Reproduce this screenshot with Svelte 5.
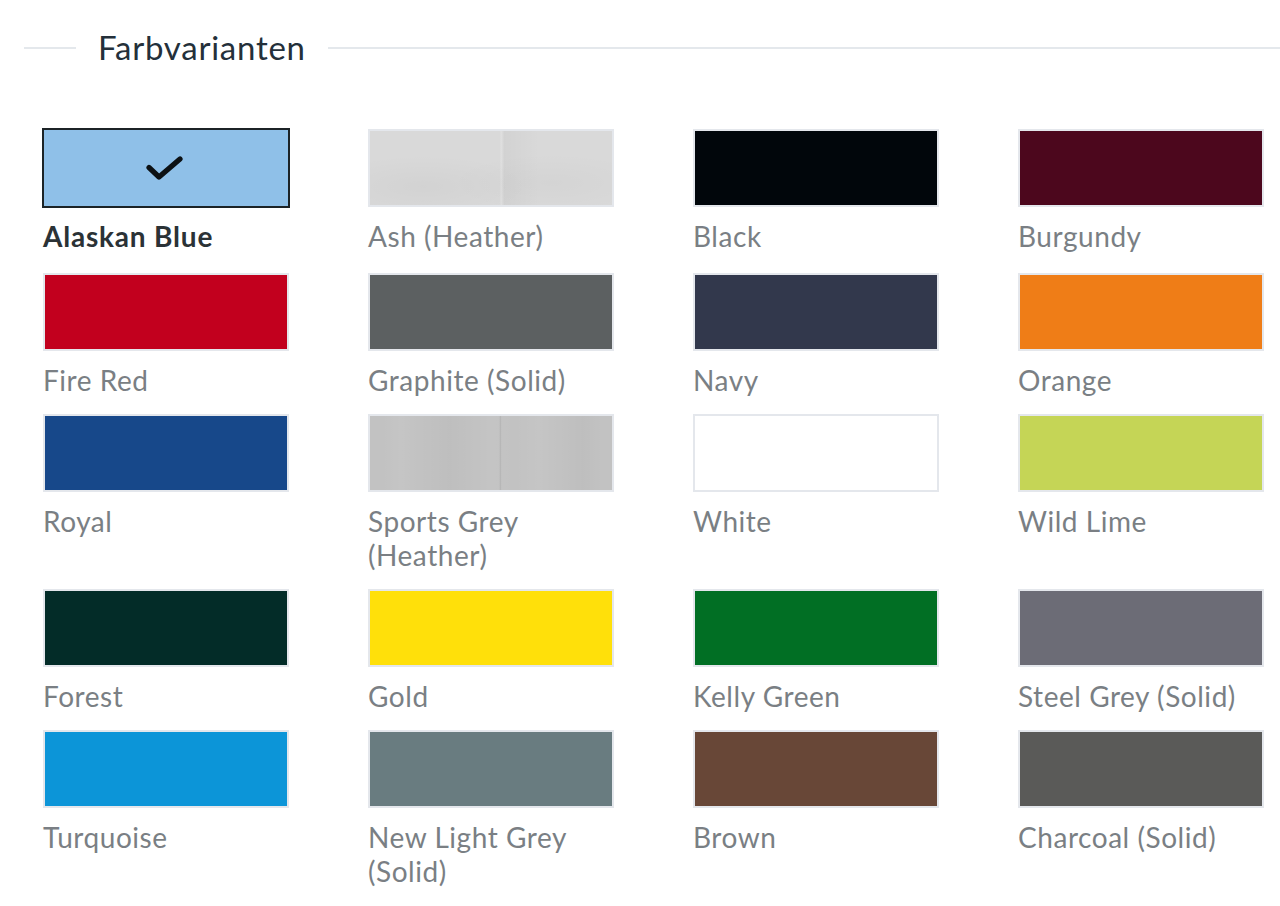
<script>
    const variants = [
        { name: 'Alaskan Blue', color: '#8fc0e8', selected: true },
        { name: 'Ash (Heather)', color: '#d9d9d9', texture: 'ash' },
        { name: 'Black', color: '#01060b' },
        { name: 'Burgundy', color: '#4c071d' },
        { name: 'Fire Red', color: '#c2001e' },
        { name: 'Graphite (Solid)', color: '#5c6061' },
        { name: 'Navy', color: '#32384c' },
        { name: 'Orange', color: '#ef7d17' },
        { name: 'Royal', color: '#17488a' },
        { name: 'Sports Grey (Heather)', color: '#c2c2c2', texture: 'sport' },
        { name: 'White', color: '#ffffff' },
        { name: 'Wild Lime', color: '#c5d556' },
        { name: 'Forest', color: '#032c28' },
        { name: 'Gold', color: '#ffe00a' },
        { name: 'Kelly Green', color: '#016f24' },
        { name: 'Steel Grey (Solid)', color: '#6c6c76' },
        { name: 'Turquoise', color: '#0c95d8' },
        { name: 'New Light Grey (Solid)', color: '#697c80' },
        { name: 'Brown', color: '#684737' },
        { name: 'Charcoal (Solid)', color: '#5a5a58' }
    ];
</script>

<div class="panel">
    <div class="heading">
        <span class="rule short"></span>
        <h2>Farbvarianten</h2>
        <span class="rule"></span>
    </div>

    <div class="grid">
        {#each variants as variant}
            <div class="variant" class:selected={variant.selected}>
                <div class="swatch {variant.texture || ''}" style="background-color: {variant.color}">
                    {#if variant.selected}
                        <svg width="40" height="28" viewBox="0 0 40 28" fill="none">
                            <path d="M3 13.5 L13 23 L34 5" stroke="#0c1114" stroke-width="5.2" stroke-linecap="round" stroke-linejoin="round" />
                        </svg>
                    {/if}
                </div>
                <div class="label">{variant.name}</div>
            </div>
        {/each}
    </div>
</div>

<style>
    :global(body) {
        background: #fff;
    }

    .panel {
        padding-top: 24px;
        font-family: Lato, "Open Sans", sans-serif;
    }

    .heading {
        display: flex;
        align-items: center;
        gap: 22px;
        padding-left: 24px;
        height: 48px;
    }

    .heading h2 {
        margin: 0 0 2px;
        font-size: 33px;
        font-weight: 400;
        letter-spacing: 0.75px;
        color: #24303a;
        white-space: nowrap;
        line-height: 46px;
    }

    .rule {
        flex: 1;
        height: 2px;
        background: #e4e8ec;
    }

    .rule.short {
        flex: 0 0 52px;
    }

    .grid {
        display: grid;
        grid-template-columns: repeat(4, 246px);
        column-gap: 79px;
        padding: 57px 0 0 43px;
    }

    .variant {
        padding-bottom: 17px;
    }

    .swatch {
        box-sizing: border-box;
        height: 78px;
        border: 2px solid #e4e7ec;
        display: flex;
        align-items: center;
        justify-content: center;
    }

    .selected {
        padding-bottom: 20px;
    }

    .selected .swatch {
        height: 80px;
        margin: -1px;
        border-color: #1c2326;
    }

    .ash {
        background-image:
            linear-gradient(90deg, transparent 53.6%, rgba(255, 255, 255, 0.18) 54.2%, rgba(0, 0, 0, 0.03) 55.5%, transparent 70%),
            radial-gradient(ellipse at 22% 75%, rgba(0, 0, 0, 0.03), transparent 40%),
            radial-gradient(ellipse at 75% 70%, rgba(0, 0, 0, 0.025), transparent 40%);
    }

    .sport {
        background-image:
            linear-gradient(90deg, transparent 53.4%, rgba(0, 0, 0, 0.08) 53.8%, transparent 54.4%),
            linear-gradient(90deg, transparent 5%, rgba(255, 255, 255, 0.05) 13%, transparent 20%, rgba(0, 0, 0, 0.02) 33%, transparent 44%, rgba(255, 255, 255, 0.04) 50%, transparent 60%, rgba(255, 255, 255, 0.05) 70%, transparent 78%, rgba(0, 0, 0, 0.02) 88%, transparent 96%);
    }

    .label {
        margin-top: 12px;
        font-size: 28px;
        line-height: 34px;
        letter-spacing: 0.55px;
        color: #7a7f84;
    }

    .selected .label {
        font-weight: 700;
        color: #2b3236;
        letter-spacing: 0.8px;
    }
</style>
